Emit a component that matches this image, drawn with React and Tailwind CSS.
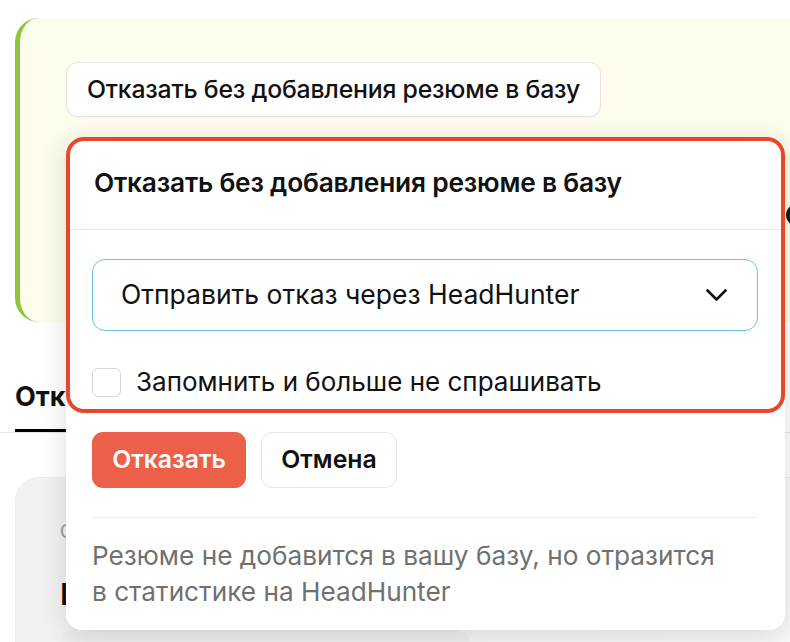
import React from 'react';

export default function App() {
  return (
    <div className="relative w-[790px] h-[642px] overflow-hidden bg-white font-['Inter',sans-serif] text-[#111]">
      {/* Candidate card behind the popover */}
      <div className="relative ml-[15px] mt-[18px] h-[304px] w-[800px] rounded-l-[24px] border-l-[5px] border-[#8cc63f] bg-[#fefcec] pl-[46px] pt-[44px]">
        <button className="h-[55px] rounded-[12px] border border-[#e6e6e0] bg-white px-[20px] text-[24.8px] font-medium tracking-[-0.2px] shadow-[0_1px_2px_rgba(0,0,0,0.04)]">
          Отказать без добавления резюме в базу
        </button>
        <div className="absolute left-[766px] top-[186px] h-[22px] w-[22px] rounded-full bg-[#1a1a1a]" />
      </div>

      {/* Tabs */}
      <div className="mt-[60px] flex items-end border-b border-[#e5e5e5] pl-[15px]">
        <div className="border-b-[3px] border-black pb-[17px] text-[27px] font-bold leading-[30px]">
          Отказы
        </div>
      </div>

      {/* Lower card */}
      <div className="ml-[15px] mt-[44px] h-[200px] w-[800px] rounded-tl-[24px] border border-[#ececec] bg-gradient-to-r from-[#f2f2f2] to-[#fafafa] pl-[44px] pt-[42px]">
        <div className="text-[18px] leading-[24px] text-[#999]">С</div>
        <div className="mt-[32px] text-[30px] font-semibold leading-[36px]">Имя</div>
        <div className="mt-[17px] h-[40px] w-[410px] rounded-t-[16px] bg-[#efefef]" />
      </div>

      {/* Popover */}
      <div className="absolute left-[66px] top-[137px] w-[719px] rounded-[16px] bg-white shadow-[0_6px_30px_rgba(0,0,0,0.14)]">
        <div className="flex h-[93px] items-center border-b border-[#e8e8e8] px-[28px]">
          <h3 className="text-[26.3px] font-semibold tracking-[-0.2px]">Отказать без добавления резюме в базу</h3>
        </div>
        <div className="px-[26px] pt-[29px]">
          <div className="flex h-[72px] w-[666px] items-center justify-between rounded-[13px] border border-[#6cc5df] pl-[28px] pr-[30px]">
            <span className="text-[26.5px]">Отправить отказ через HeadHunter</span>
            <svg width="21" height="12" viewBox="0 0 21 12" fill="none">
              <path d="M1.5 1.5 10.5 10.5 19.5 1.5" stroke="#111" strokeWidth="2.6" strokeLinecap="round" strokeLinejoin="round" />
            </svg>
          </div>
          <label className="mt-[36px] flex h-[30px] items-center gap-[15px]">
            <span className="h-[29px] w-[29px] rounded-[6px] border border-[#d6d6d6] bg-white" />
            <span className="text-[26px] leading-[30px]">Запомнить и больше не спрашивать</span>
          </label>
          <div className="mt-[35px] flex gap-[15px]">
            <button className="h-[56px] w-[154px] rounded-[11px] bg-[#ec5f48] text-[24.8px] font-semibold text-white">
              Отказать
            </button>
            <button className="h-[56px] w-[136px] rounded-[11px] border border-[#e6e6e6] bg-white text-[24.8px] font-semibold">
              Отмена
            </button>
          </div>
          <div className="mt-[29px] w-[666px] border-t border-[#ececec] pb-[20px] pt-[20px] text-[26.2px] leading-[36px] text-[#707070]">
            Резюме не добавится в вашу базу, но отразится
            <br />
            в статистике на HeadHunter
          </div>
        </div>
      </div>

      {/* Red highlight frame */}
      <div className="pointer-events-none absolute left-[66px] top-[137px] h-[276px] w-[719px] rounded-[18px] border-[4px] border-[#e8472b]" />
    </div>
  );
}
